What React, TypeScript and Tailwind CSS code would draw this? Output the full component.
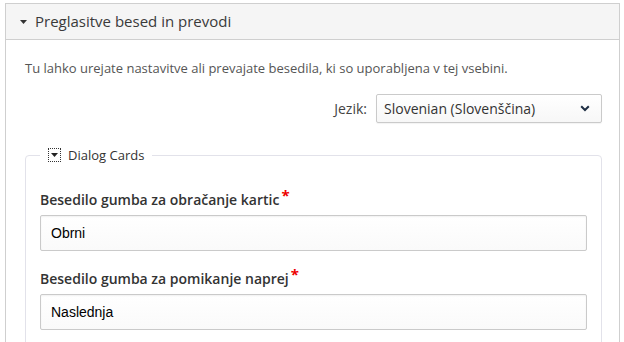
const Caret = ({ className = '' }: { className?: string }) => (
  <svg className={className} width="7" height="4" viewBox="0 0 7 4" aria-hidden="true">
    <path d="M0 0h7L3.5 4z" fill="currentColor" />
  </svg>
);

const Field = ({ label, value }: { label: string; value: string }) => (
  <div className="flex flex-col">
    <label className="flex items-start text-[14px] leading-[20px] font-semibold text-[#333]">
      {label}
      <span className="ml-[2px] -mt-[5px] text-[15px] leading-[20px] font-bold text-[#e00]">*</span>
    </label>
    <div className="mt-[5px] flex h-[36px] items-center rounded-[2px] border border-[#cacaca] bg-gradient-to-b from-white to-[#fafafa] px-[10px] shadow-[inset_0_1px_2px_rgba(0,0,0,0.06)]">
      <span className="font-['Liberation_Sans',Arial,sans-serif] text-[14px] text-black">{value}</span>
    </div>
  </div>
);

export default function App() {
  return (
    <div className="h-[342px] overflow-hidden bg-white pt-[3px] pl-[5px] pr-[4px] font-['Open_Sans',sans-serif]">
      <section className="border border-[#cfcfcf]">
        <header className="flex h-[36px] items-center gap-[8px] border-b border-[#cfcfcf] bg-[#f5f5f5] pl-[14px] text-[15px] text-[#3a3a3a]">
          <Caret className="text-[#333]" />
          <span>Preglasitve besed in prevodi</span>
        </header>

        <div className="pt-[18px] pr-[17px] pl-[19px] pb-[20px]">
          <p className="text-[13px] leading-[20px] text-[#555]">
            Tu lahko urejate nastavitve ali prevajate besedila, ki so uporabljena v tej vsebini.
          </p>

          <div className="mt-[16px] flex items-center justify-end gap-[9px]">
            <span className="text-[14px] text-[#444]">Jezik:</span>
            <div className="flex h-[29px] w-[226px] items-center justify-between rounded-[2px] border border-[#cacaca] bg-gradient-to-b from-white to-[#f7f7f7] pl-[7px] pr-[11px] shadow-[0_1px_1px_rgba(0,0,0,0.05)]">
              <span className="text-[14px] text-[#333]">Slovenian (Slovenščina)</span>
              <svg width="10" height="7" viewBox="0 0 10 7" aria-hidden="true">
                <path d="M1.2 1.2L5 5l3.8-3.8" fill="none" stroke="#1f2f44" strokeWidth="2" />
              </svg>
            </div>
          </div>

          <fieldset className="mt-[24px] rounded-[4px] border border-[#e2e2ea] px-[14px] pb-[20px]">
            <legend className="flex items-center gap-[7px] px-[8px] text-[13px] leading-[16px] text-[#333]">
              <span className="flex h-[14px] w-[13px] items-center justify-center border border-dotted border-[#333]">
                <Caret className="text-[#222]" />
              </span>
              <span>Dialog Cards</span>
            </legend>
            <div className="mt-[27px] flex flex-col gap-[18px]">
              <Field label="Besedilo gumba za obračanje kartic" value="Obrni" />
              <Field label="Besedilo gumba za pomikanje naprej" value="Naslednja" />
            </div>
          </fieldset>
        </div>
      </section>
    </div>
  );
}
